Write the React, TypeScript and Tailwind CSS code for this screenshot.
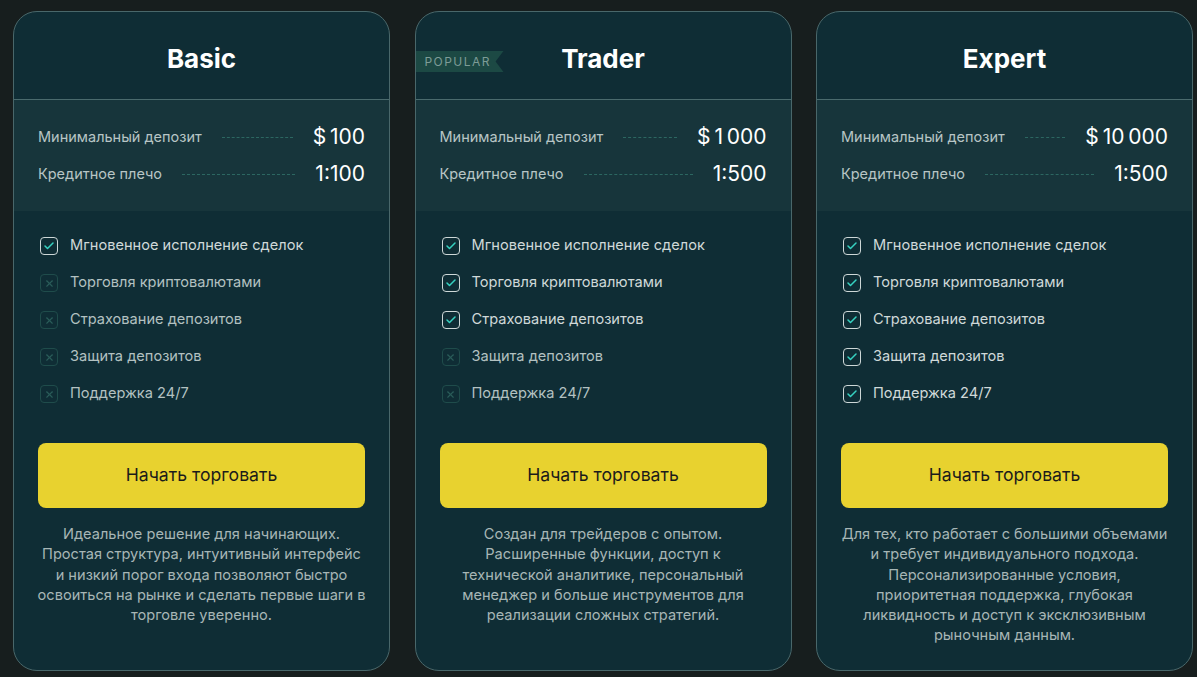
import { Check, X } from "lucide-react";

type Plan = {
  name: string;
  popular?: boolean;
  deposit: string;
  leverage: string;
  enabled: number;
  lines: string[];
};

const features = [
  "Мгновенное исполнение сделок",
  "Торговля криптовалютами",
  "Страхование депозитов",
  "Защита депозитов",
  "Поддержка 24/7",
];

// description lines are broken the same way as on the design
const plans: Plan[] = [
  {
    name: "Basic",
    deposit: "$\u2009100",
    leverage: "1:100",
    enabled: 1,
    lines: [
      "Идеальное решение для начинающих.",
      "Простая структура, интуитивный интерфейс",
      "и низкий порог входа позволяют быстро",
      "освоиться на рынке и сделать первые шаги в",
      "торговле уверенно.",
    ],
  },
  {
    name: "Trader",
    popular: true,
    deposit: "$\u20091\u2009000",
    leverage: "1:500",
    enabled: 3,
    lines: [
      "Создан для трейдеров с опытом.",
      "Расширенные функции, доступ к",
      "технической аналитике, персональный",
      "менеджер и больше инструментов для",
      "реализации сложных стратегий.",
    ],
  },
  {
    name: "Expert",
    deposit: "$\u200910\u2009000",
    leverage: "1:500",
    enabled: 5,
    lines: [
      "Для тех, кто работает с большими объемами",
      "и требует индивидуального подхода.",
      "Персонализированные условия,",
      "приоритетная поддержка, глубокая",
      "ликвидность и доступ к эксклюзивным",
      "рыночным данным.",
    ],
  },
];

const StatRow = ({ label, value }: { label: string; value: string }) => (
  <div className="flex items-center h-6">
    <span className="text-[14.5px] text-[#b8c5c5] whitespace-nowrap">{label}</span>
    <span className="flex-1 mx-5 border-t border-dashed border-[#2c6761]" />
    <span className="text-[21px] font-normal text-white whitespace-nowrap">{value}</span>
  </div>
);

const PlanCard = ({ plan }: { plan: Plan }) => {
  return (
    <div className="relative flex flex-col bg-[#0f2d35] border border-[#49676a] rounded-[24px] overflow-hidden">
      {plan.popular && (
        <div className="absolute left-0 top-[39px] h-[21px] w-[88px] pl-[9px] flex items-center bg-[#1c4944] text-[12px] tracking-[0.12em] text-[#7d9c97] [clip-path:polygon(0_0,100%_0,91%_50%,100%_100%,0_100%)]">
          POPULAR
        </div>
      )}

      <div className="pt-[31px] pb-[24px] border-b border-[#4a6a6d] text-center">
        <h2 className="text-[26px] leading-8 font-bold text-white">{plan.name}</h2>
      </div>

      <div className="bg-[#17353b] px-6 pt-[25px] pb-[25px] flex flex-col gap-[13px]">
        <StatRow label="Минимальный депозит" value={plan.deposit} />
        <StatRow label="Кредитное плечо" value={plan.leverage} />
      </div>

      <div className="px-6 pt-[25px] pb-6 flex flex-col flex-1">
        <ul className="flex flex-col gap-[17px] pl-[2px]">
          {features.map((f, i) => {
            const on = i < plan.enabled;
            return (
              <li key={f} className="flex items-center gap-3 h-5">
                {on ? (
                  <span className="w-[18px] h-[18px] rounded-[4px] border-[1.5px] border-[#cdd7d7] flex items-center justify-center">
                    <Check size={12} strokeWidth={3} className="text-[#36d2c1]" />
                  </span>
                ) : (
                  <span className="w-[18px] h-[18px] rounded-[4px] border-[1.5px] border-[#1f4c4b] flex items-center justify-center">
                    <X size={11} strokeWidth={2.5} className="text-[#2a5c59]" />
                  </span>
                )}
                <span className={"text-[14.6px] " + (on ? "text-[#d0d9d9]" : "text-[#b3c1c1]")}>{f}</span>
              </li>
            );
          })}
        </ul>

        <button className="mt-[39px] h-[65px] w-full rounded-lg bg-[#e8d22f] text-[17.6px] text-[#1b1b1b]">
          Начать торговать
        </button>

        <p className="mt-4 -mx-2 text-center text-[14.6px] leading-[20.25px] text-[#a7b6b6]">
          {plan.lines.map((l) => (
            <span key={l} className="block whitespace-nowrap">
              {l}
            </span>
          ))}
        </p>
      </div>
    </div>
  );
};

export default function App() {
  return (
    <div className="min-h-[677px] bg-[#171e1e] pl-[13px] pt-[11px] pb-2 font-['Inter',sans-serif]">
      <div className="grid grid-cols-[repeat(3,377px)] gap-x-[24.5px]">
        {plans.map((p) => (
          <PlanCard key={p.name} plan={p} />
        ))}
      </div>
    </div>
  );
}
